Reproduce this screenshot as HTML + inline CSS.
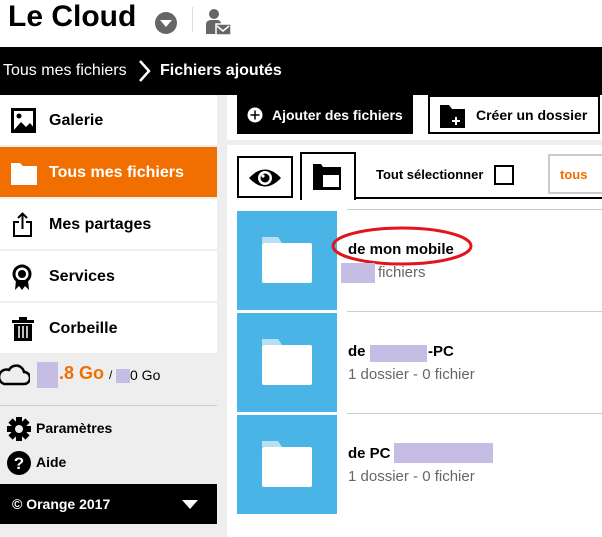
<!DOCTYPE html>
<html><head><meta charset="utf-8"><style>
*{margin:0;padding:0;box-sizing:border-box}
body{width:602px;height:537px;overflow:hidden;background:#eee;font-family:"Liberation Sans",Arial,sans-serif;position:relative}
.a{position:absolute}
.b{font-weight:bold}
.item{position:absolute;left:0;width:217px;height:50px;background:#fff;font-weight:bold;font-size:16px;color:#000}
.item span{position:absolute;left:49px;top:17px}
.item svg{position:absolute;left:11px;top:13px}
.tile{position:absolute;left:237px;width:100px;height:99px;background:#4bb4e6}
.tile svg{position:absolute;left:25px;top:26px}
.sep{position:absolute;left:347px;right:0;height:1px;background:#ccc}
.t1{position:absolute;left:348px;font-size:15px;font-weight:bold}
.t2{position:absolute;left:348px;font-size:15px;color:#666}
.red{background:#c6bde4;position:absolute}
</style></head><body>
<div class="a" style="left:0;top:0;width:602px;height:47px;background:#fff"></div>
<div class="a b" style="left:8px;top:0px;font-size:30px">Le Cloud</div>
<svg class="a" style="left:155px;top:12px" width="22" height="22"><circle cx="11" cy="11" r="11" fill="#666"/><path d="M5 8h12l-6 7z" fill="#fff"/></svg>
<div class="a" style="left:192px;top:7px;width:1px;height:25px;background:#ddd"></div>
<svg class="a" style="left:206px;top:8px" width="26" height="27"><circle cx="8" cy="6" r="5" fill="#666"/><path d="M0 26V17q0-5 5-5h6q4 0 4 4v10z" fill="#666"/><rect x="10" y="16" width="15" height="11" fill="#666" stroke="#fff" stroke-width="1.5"/><path d="M11 18l6 5 6-5" stroke="#fff" fill="none" stroke-width="1.5"/></svg>
<div class="a" style="left:0;top:47px;width:602px;height:48px;background:#000"></div>
<div class="a" style="left:3px;top:62px;font-size:16px;color:#fff">Tous mes fichiers</div>
<svg class="a" style="left:138px;top:59px" width="14" height="24"><path d="M2 2l9 10-9 10" stroke="#fff" stroke-width="2.5" fill="none"/></svg>
<div class="a b" style="left:160px;top:62px;font-size:16px;color:#fff">Fichiers ajoutés</div>

<div class="item" style="top:95px"><svg width="26" height="26"><rect x="1.5" y="1.5" width="22" height="22" fill="none" stroke="#000" stroke-width="3"/><circle cx="8" cy="8" r="2.5"/><path d="M2 23l8-9 5 5 4-4 5 6v2z"/></svg><span>Galerie</span></div>
<div class="item" style="top:147px;background:#f16e00;color:#fff"><svg width="26" height="26" style="top:14px"><path d="M0 2h9l3 3h14v19H0z" fill="#fff"/></svg><span>Tous mes fichiers</span></div>
<div class="item" style="top:199px"><svg width="26" height="26"><path d="M8 10H3v14h17V10h-5M11.5 17V2M7 6l4.5-4.5L16 6" fill="none" stroke="#000" stroke-width="2"/></svg><span>Mes partages</span></div>
<div class="item" style="top:251px"><svg width="26" height="28"><circle cx="11" cy="10" r="8" fill="none" stroke="#000" stroke-width="3"/><circle cx="11" cy="10" r="4"/><path d="M5 16l-1 10 4-4 3 4 3-4 4 4-1-10z"/></svg><span>Services</span></div>
<div class="item" style="top:303px"><svg width="26" height="26"><rect x="1" y="4" width="22" height="3"/><rect x="8" y="1" width="8" height="3"/><rect x="3" y="8" width="18" height="17"/><path d="M8 10v12M12 10v12M16 10v12" stroke="#fff" stroke-width="1.5"/></svg><span>Corbeille</span></div>

<svg class="a" style="left:0;top:362px" width="30" height="24"><path d="M4 22h20a6 6 0 0 0 0-12 8 8 0 0 0-15-2 7 7 0 0 0-5 14z" fill="none" stroke="#000" stroke-width="2.5"/></svg>
<div class="red" style="left:37px;top:362px;width:21px;height:26px"></div>
<div class="a b" style="left:59px;top:363px;font-size:18px;color:#f16e00">.8 Go</div>
<div class="a" style="left:109px;top:368px;font-size:12px">/</div>
<div class="red" style="left:116px;top:369px;width:14px;height:14px"></div>
<div class="a" style="left:130px;top:367px;font-size:14px">0 Go</div>
<div class="a" style="left:0;top:405px;width:217px;height:1px;background:#ccc"></div>
<svg class="a" style="left:7px;top:417px" width="24" height="24"><g fill="#000"><circle cx="12" cy="12" r="8"/><rect x="9" y="0" width="6" height="24"/><rect x="0" y="9" width="24" height="6"/><rect x="9" y="0" width="6" height="24" transform="rotate(45 12 12)"/><rect x="9" y="0" width="6" height="24" transform="rotate(-45 12 12)"/></g><circle cx="12" cy="12" r="4" fill="#eee"/></svg>
<div class="a b" style="left:36px;top:420px;font-size:14px">Paramètres</div>
<svg class="a" style="left:7px;top:451px" width="24" height="24"><circle cx="12" cy="12" r="12"/><text x="12" y="18" text-anchor="middle" fill="#fff" font-size="17" font-weight="bold" font-family="Liberation Sans">?</text></svg>
<div class="a b" style="left:36px;top:454px;font-size:14px">Aide</div>
<div class="a" style="left:0;top:484px;width:217px;height:40px;background:#000"></div>
<div class="a b" style="left:12px;top:496px;font-size:14px;color:#fff">© Orange 2017</div>
<svg class="a" style="left:182px;top:500px" width="16" height="10"><path d="M0 0h16l-8 9z" fill="#fff"/></svg>

<div class="a" style="left:227px;top:95px;width:375px;height:442px;background:#fff"></div>
<div class="a" style="left:227px;top:140px;width:375px;height:5px;background:#eee"></div>
<div class="a" style="left:237px;top:95px;width:176px;height:39px;background:#000"></div>
<svg class="a" style="left:247px;top:107px" width="16" height="16"><circle cx="8" cy="8" r="7.5" fill="#fff"/><path d="M8 3.5v9M3.5 8h9" stroke="#000" stroke-width="1.5"/></svg>
<div class="a b" style="left:272px;top:107px;font-size:14px;color:#fff">Ajouter des fichiers</div>
<div class="a" style="left:428px;top:95px;width:172px;height:39px;border:2px solid #000"></div>
<svg class="a" style="left:440px;top:103px" width="26" height="25"><path d="M0 2h9l3 4h13v19H0z"/><path d="M16 14v8M12 18h8" stroke="#fff" stroke-width="2"/></svg>
<div class="a b" style="left:476px;top:107px;font-size:14px">Créer un dossier</div>

<div class="a" style="left:237px;top:156px;width:56px;height:42px;border:2px solid #000"></div>
<svg class="a" style="left:248px;top:167px" width="34" height="22"><path d="M1 11Q17-6 33 11Q17 28 1 11z"/><circle cx="17" cy="11" r="7" fill="#fff"/><circle cx="17" cy="11" r="4.5"/><circle cx="15" cy="9" r="1.6" fill="#fff"/></svg>
<div class="a" style="left:300px;top:152px;width:56px;height:48px;border:2px solid #000;border-bottom:none;background:#fff"></div>
<div class="a" style="left:354px;top:197px;width:248px;height:2px;background:#000"></div>
<svg class="a" style="left:313px;top:164px" width="30" height="26"><path d="M0 0h8l2 3h18v23H0z"/><rect x="10" y="11" width="16" height="12" fill="#fff"/></svg>
<div class="a b" style="left:376px;top:167px;font-size:13px">Tout sélectionner</div>
<div class="a" style="left:494px;top:165px;width:20px;height:20px;border:2px solid #000"></div>
<div class="a" style="left:548px;top:154px;width:60px;height:40px;border:2px solid #ccc"></div>
<div class="a b" style="left:560px;top:167px;font-size:13px;color:#f16e00">tous</div>

<div class="sep" style="top:209px"></div>
<div class="sep" style="top:311px"></div>
<div class="sep" style="top:413px"></div>
<div class="tile" style="top:211px"><svg width="50" height="46"><path d="M0 0h16l4 6H0z" fill="#b7e0f5"/><rect x="0" y="6" width="50" height="40" rx="2" fill="#fff"/></svg></div>
<div class="tile" style="top:313px"><svg width="50" height="46"><path d="M0 0h16l4 6H0z" fill="#b7e0f5"/><rect x="0" y="6" width="50" height="40" rx="2" fill="#fff"/></svg></div>
<div class="tile" style="top:415px"><svg width="50" height="46"><path d="M0 0h16l4 6H0z" fill="#b7e0f5"/><rect x="0" y="6" width="50" height="40" rx="2" fill="#fff"/></svg></div>

<div class="t1" style="top:241px">de mon mobile</div>
<svg class="a" style="left:330px;top:224px" width="145" height="44"><ellipse cx="72" cy="22" rx="69" ry="18" fill="none" stroke="#e3141b" stroke-width="3"/></svg>
<div class="red" style="left:341px;top:263px;width:34px;height:20px"></div>
<div class="t2" style="top:264px;left:378px">fichiers</div>

<div class="t1" style="top:343px">de</div>
<div class="red" style="left:370px;top:345px;width:57px;height:17px"></div>
<div class="t1" style="top:343px;left:428px">-PC</div>
<div class="t2" style="top:366px">1 dossier - 0 fichier</div>

<div class="t1" style="top:445px">de PC</div>
<div class="red" style="left:394px;top:443px;width:99px;height:20px"></div>
<div class="t2" style="top:468px">1 dossier - 0 fichier</div>
</body></html>
